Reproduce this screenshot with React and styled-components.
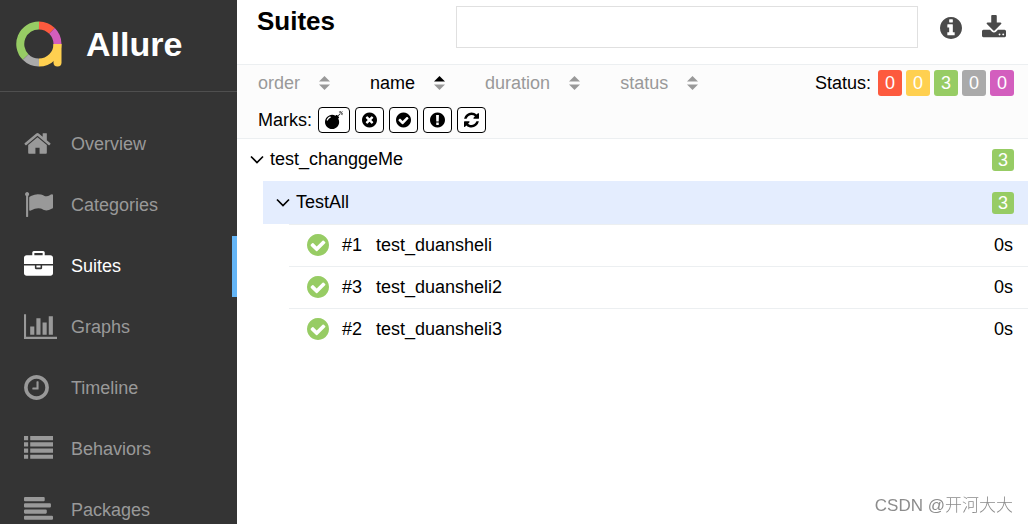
import { useState } from 'react';
import styled, { createGlobalStyle } from 'styled-components';

const GlobalStyle = createGlobalStyle`
  * {
    box-sizing: border-box;
  }

  body {
    margin: 0;
    background: #fff;
    color: #000;
    font-family: "Liberation Sans", Arial, sans-serif;
    font-size: 18px;
    line-height: 22px;
  }

  button,
  input {
    font: inherit;
    color: inherit;
  }
`;

const CIRCLE =
  'm0 0M1664 896q0 209-103 385.5t-279.5 279.5-385.5 103-385.5-103-279.5-279.5-103-385.5 103-385.5 279.5-279.5 385.5-103 385.5 103 279.5 279.5 103 385.5z';

// [left edge, advance width, path], all on a 1792 unit em
const ICONS = {
  home: [64, 1664, 'M1472 992v480q0 26-19 45t-45 19h-384v-384h-256v384h-384q-26 0-45-19t-19-45v-480q0-1 .5-3t.5-3l575-474 575 474q1 2 1 6zm223-69l-62 74q-8 9-21 11h-3q-13 0-21-7l-692-577-692 577q-12 8-24 7-13-2-21-11l-62-74q-8-10-7-23.5t11-21.5l719-599q32-26 76-26t76 26l244 204v-195q0-14 9-23t23-9h192q14 0 23 9t9 23v408l219 182q10 8 11 21.5t-7 23.5z'],
  flag: [0, 1792, 'M320 256q0 72-64 110v1266q0 13-9.5 22.5t-22.5 9.5h-64q-13 0-22.5-9.5t-9.5-22.5v-1266q-64-38-64-110 0-53 37.5-90.5t90.5-37.5 90.5 37.5 37.5 90.5zm1472 64v763q0 25-12.5 38.5t-39.5 27.5q-215 116-369 116-61 0-123.5-22t-108.5-48-115.5-48-142.5-22q-192 0-464 146-17 9-33 9-26 0-45-19t-19-45v-742q0-32 31-55 21-14 79-43 236-120 421-120 107 0 200 29t219 88q38 19 88 19 54 0 117.5-21t110-47 88-47 54.5-21q26 0 45 19t19 45z'],
  briefcase: [0, 1792, 'M640 256h512v-128h-512v128zm1152 640v480q0 66-47 113t-113 47h-1472q-66 0-113-47t-47-113v-480h672v160q0 26 19 45t45 19h320q26 0 45-19t19-45v-160h672zm-768 0v128h-256v-128h256zm768-480v384h-1792v-384q0-66 47-113t113-47h352v-160q0-40 28-68t68-28h576q40 0 68 28t28 68v160h352q66 0 113 47t47 113z'],
  chart: [0, 2048, 'M640 896v512h-256v-512h256zm384-512v1024h-256v-1024h256zm1024 1152v128h-2048v-1536h128v1408h1920zm-640-896v768h-256v-768h256zm384-384v1152h-256v-1152h256z'],
  clock: [128, 1536, 'M1024 544v448q0 14-9 23t-23 9h-320q-14 0-23-9t-9-23v-64q0-14 9-23t23-9h224v-352q0-14 9-23t23-9h64q14 0 23 9t9 23zm416 352q0-148-73-273t-198-198-273-73-273 73-198 198-73 273 73 273 198 198 273 73 273-73 198-198 73-273z' + CIRCLE],
  list: [0, 1792, 'M0 128h256v256h-256zM384 128h1408v256h-1408zM0 512h256v256h-256zM384 512h1408v256h-1408zM0 896h256v256h-256zM384 896h1408v256h-1408zM0 1280h256v256h-256zM384 1280h1408v256h-1408z'],
  align: [0, 1792, 'M64 128h1152q64 0 64 64v128q0 64-64 64h-1152q-64 0-64-64v-128q0-64 64-64zM64 512h1536q64 0 64 64v128q0 64-64 64h-1536q-64 0-64-64v-128q0-64 64-64zM64 896h1280q64 0 64 64v128q0 64-64 64h-1280q-64 0-64-64v-128q0-64 64-64zM64 1280h1664q64 0 64 64v128q0 64-64 64h-1664q-64 0-64-64v-128q0-64 64-64z'],
  info: [128, 1536, 'M1152 1376v-160q0-14-9-23t-23-9h-96v-512q0-14-9-23t-23-9h-320q-14 0-23 9t-9 23v160q0 14 9 23t23 9h96v320h-96q-14 0-23 9t-9 23v160q0 14 9 23t23 9h448q14 0 23-9t9-23zm-128-896v-160q0-14-9-23t-23-9h-192q-14 0-23 9t-9 23v160q0 14 9 23t23 9h192q14 0 23-9t9-23z' + CIRCLE],
  download: [64, 1664, 'M1344 1344q0-26-19-45t-45-19-45 19-19 45 19 45 45 19 45-19 19-45zm256 0q0-26-19-45t-45-19-45 19-19 45 19 45 45 19 45-19 19-45zm128-224v320q0 40-28 68t-68 28h-1472q-40 0-68-28t-28-68v-320q0-40 28-68t68-28h465l135 136q58 56 136 56t136-56l136-136h464q40 0 68 28t28 68zm-325-569q17 41-14 70l-448 448q-18 19-45 19t-45-19l-448-448q-31-29-14-70 17-39 59-39h256v-448q0-26 19-45t45-19h256q26 0 45 19t19 45v448h256q42 0 59 39z'],
  bomb: [0, 1792, 'M571 589q-10-25-34-35t-49 0q-108 44-191 127t-127 191q-10 25 0 49t35 34q13 5 24 5 42 0 60-40 34-84 98.5-148.5t148.5-98.5q25-11 35-35t0-49zm942-356l46 46-244 243 68 68q19 19 19 45.5t-19 45.5l-64 64q89 161 89 343 0 143-55.5 273.5t-150 225-225 150-273.5 55.5-273.5-55.5-225-150-150-225-55.5-273.5 55.5-273.5 150-225 225-150 273.5-55.5q182 0 343 89l64-64q19-19 45.5-19t45.5 19l68 68zm8-56q-10 10-22 10-13 0-23-10l-91-90q-9-10-9-23t9-23q10-9 23-9t23 9l90 91q10 9 10 22.5t-10 22.5zm230 230q-11 9-23 9t-23-9l-90-91q-10-9-10-22.5t10-22.5q9-10 22.5-10t22.5 10l91 90q9 10 9 23t-9 23zm41-183q0 14-9 23t-23 9h-96q-14 0-23-9t-9-23 9-23 23-9h96q14 0 23 9t9 23zm-192-192v96q0 14-9 23t-23 9-23-9-9-23v-96q0-14 9-23t23-9 23 9 9 23zm151 55l-91 90q-10 10-22 10-13 0-23-10-10-9-10-22.5t10-22.5l90-91q10-9 23-9t23 9q9 10 9 23t-9 23z'],
  times: [128, 1536, 'M1277 1122q0-26-19-45l-181-181 181-181q19-19 19-45 0-27-19-46l-90-90q-19-19-46-19-26 0-45 19l-181 181-181-181q-19-19-45-19-27 0-46 19l-90 90q-19 19-19 46 0 26 19 45l181 181-181 181q-19 19-19 45 0 27 19 46l90 90q19 19 46 19 26 0 45-19l181-181 181 181q19 19 45 19 27 0 46-19l90-90q19-19 19-46z' + CIRCLE],
  check: [128, 1536, 'M1412 734q0-28-18-46l-91-90q-19-19-45-19t-45 19l-408 407-226-226q-19-19-45-19t-45 19l-91 90q-18 18-18 46 0 27 18 45l362 362q19 19 45 19 27 0 46-19l543-543q18-18 18-45z' + CIRCLE],
  alert: [128, 1536, 'M1024 1375v-190q0-14-9-23.5t-22-9.5h-192q-13 0-23 10t-10 23v190q0 13 10 23t23 10h192q13 0 22-9.5t9-23.5zm-2-344l18-621q0-12-10-18-10-8-24-8h-220q-14 0-24 8-10 6-10 18l17 621q0 10 10 17.5t24 7.5h185q14 0 23.5-7.5t10.5-17.5z' + CIRCLE],
  refresh: [128, 1536, 'M1639 1056q0 5-1 7-64 268-268 434.5t-478 166.5q-146 0-282.5-55t-243.5-157l-129 129q-19 19-45 19t-45-19-19-45v-448q0-26 19-45t45-19h448q26 0 45 19t19 45-19 45l-137 137q71 66 161 102t187 36q134 0 250-65t186-179q11-17 53-117 8-23 30-23h192q13 0 22.5 9.5t9.5 22.5zm25-800v448q0 26-19 45t-45 19h-448q-26 0-45-19t-19-45 19-45l138-138q-148-137-349-137-134 0-250 65t-186 179q-11 17-53 117-8 23-30 23h-199q-13 0-22.5-9.5t-9.5-22.5v-7q65-268 270-434.5t480-166.5q146 0 284 55.5t245 156.5l130-129q19-19 45-19t45 19 19 45z'],
};

const Svg = styled.svg`
  display: block;
  flex: none;
  fill: currentColor;
`;

function Icon({ name, size }) {
  const [left, width, path] = ICONS[name];
  return (
    <Svg
      viewBox={`${left} 0 ${width} 1792`}
      width={Math.round((size * width) / 1792)}
      height={size}
      aria-hidden="true"
    >
      <path fillRule="evenodd" d={path} />
    </Svg>
  );
}

const Page = styled.div`
  display: flex;
  height: 100vh;
  overflow: hidden;
`;

const Sidebar = styled.aside`
  flex: none;
  width: 237px;
  background: #343434;
  color: #999;
  overflow: hidden;
`;

const Brand = styled.a`
  display: flex;
  align-items: center;
  gap: 24px;
  height: 92px;
  padding: 0 16px 4px;
  border-bottom: 1px solid #4f4f4f;
  color: #fff;
  font-size: 34px;
  font-weight: bold;
  line-height: 40px;
  text-decoration: none;
`;

const Menu = styled.nav`
  padding-top: 22px;
`;

const MenuLink = styled.a`
  display: flex;
  align-items: center;
  height: 61px;
  padding-left: 24px;
  border-right: 5px solid ${(props) => (props.$active ? '#64b5f6' : 'transparent')};
  color: ${(props) => (props.$active ? '#fff' : '#999')};
  text-decoration: none;

  &:hover {
    color: #fff;
  }
`;

const MenuIcon = styled.span`
  width: 47px;
  padding-bottom: 3px;
`;

const MenuText = styled.span`
  padding-bottom: 1px;
`;

const Main = styled.main`
  flex: 1;
  min-width: 0;
`;

const Header = styled.header`
  display: flex;
  align-items: flex-start;
  height: 64px;
  padding: 6px 22px 0 20px;
`;

const Title = styled.h1`
  flex: none;
  width: 199px;
  margin: 0;
  font-size: 26px;
  line-height: 30px;
`;

const Search = styled.input`
  flex: 1;
  min-width: 0;
  height: 42px;
  padding: 0 10px;
  border: 1px solid #e0e0e0;
  outline: none;
`;

const HeaderButton = styled.button`
  margin: 9px 0 0 ${(props) => props.$gap}px;
  padding: 0;
  border: 0;
  background: none;
  color: #4a4a4a;
  cursor: pointer;
`;

const Toolbar = styled.section`
  padding: 5px 14px 5px 21px;
  border-top: 1px solid #eceff1;
  border-bottom: 1px solid #eceff1;
  background: #fcfcfc;
`;

const ToolbarRow = styled.div`
  display: flex;
  align-items: center;
  justify-content: space-between;
  height: 26px;

  & + & {
    margin-top: 11px;
    justify-content: flex-start;
  }
`;

const Sorters = styled.div`
  display: flex;
  gap: 39px;
`;

const SortButton = styled.button`
  display: flex;
  align-items: center;
  gap: 18px;
  padding: 0;
  border: 0;
  background: none;
  color: ${(props) => (props.$active ? '#000' : '#999')};
  cursor: pointer;
`;

const Labels = styled.div`
  display: flex;
  align-items: center;
  gap: ${(props) => props.$gap}px;
`;

const Caption = styled.span`
  margin-right: ${(props) => props.$space}px;
`;

const COLORS = {
  failed: '#fd5a3e',
  broken: '#ffd050',
  passed: '#97cc64',
  skipped: '#aaa',
  unknown: '#d35ebe',
};

const StatusButton = styled.button`
  width: 24px;
  height: 26px;
  padding: 0;
  border: 0;
  border-radius: 3px;
  background: ${(props) => COLORS[props.$status]};
  color: #fff;
  cursor: pointer;
`;

const MarkButton = styled.button`
  display: flex;
  align-items: center;
  height: 26px;
  padding: 0 6px;
  border: 1px solid #000;
  border-radius: 4px;
  background: #fff;
  cursor: pointer;
`;

const GroupRow = styled.button`
  display: flex;
  align-items: center;
  width: calc(100% - ${(props) => props.$indent}px);
  height: ${(props) => (props.$selected ? 43 : 42)}px;
  margin-left: ${(props) => props.$indent}px;
  padding: 0 14px 0 13px;
  border: 0;
  background: ${(props) => (props.$selected ? '#e4edfe' : '#fff')};
  text-align: left;
  cursor: pointer;
`;

const GroupName = styled.span`
  flex: 1;
  padding: 0 0 2px 6px;
`;

const Count = styled.span`
  width: 22px;
  border-radius: 3px;
  background: ${COLORS.passed};
  color: #fff;
  text-align: center;
`;

const Leaves = styled.div`
  margin-left: 52px;
`;

const Leaf = styled.a`
  display: flex;
  align-items: center;
  height: 42px;
  padding: 0 15px 2px 18px;
  border-top: 1px solid #eceff1;
  color: #000;
  text-decoration: none;
`;

const PassedMark = styled.span`
  color: ${COLORS.passed};
`;

const Order = styled.span`
  width: 34px;
  margin-left: 13px;
`;

const LeafName = styled.span`
  flex: 1;
`;

const Watermark = styled.div`
  position: fixed;
  right: 15px;
  bottom: 7px;
  color: #8c8c8c;
  font-family: "Liberation Sans", "Noto Sans CJK SC", sans-serif;
  font-size: 17px;
  font-weight: 300;
`;

function Logo() {
  return (
    <Svg width="46" height="46" viewBox="0 0 46 46" aria-hidden="true">
      <g fill="none" strokeWidth="8">
        <path stroke="#97cc64" d="M9.6 36A18.5 18.5 0 0 1 23 4.5" />
        <path stroke="#fd5a3e" d="M23 4.5A18.5 18.5 0 0 1 36 9.9" />
        <path stroke="#d35ebe" d="M36 9.9A18.5 18.5 0 0 1 41.5 23" />
        <path stroke="#aaa" d="M23 41.5A18.5 18.5 0 0 1 9.6 36" />
        <path stroke="#ffd050" d="M41.5 23A18.5 18.5 0 0 1 23 41.5" />
      </g>
      <path fill="#ffd050" d="M37.5 23h8v18.5a4 4 0 0 1-8 0z" />
    </Svg>
  );
}

function SortArrows({ active }) {
  return (
    <Svg width="13" height="16" viewBox="0 0 13 16" aria-hidden="true">
      <path fill={active ? '#000' : '#999'} d="M6.5 1l5.5 5.5h-11z" />
      <path fill="#999" d="M6.5 15l5.5-5.5h-11z" />
    </Svg>
  );
}

function Chevron() {
  return (
    <Svg width="14" height="10" viewBox="0 0 14 10" aria-hidden="true">
      <path d="M1 1.5l6 6 6-6" fill="none" stroke="#000" strokeWidth="1.7" />
    </Svg>
  );
}

const menu = [
  ['Overview', 'home'],
  ['Categories', 'flag'],
  ['Suites', 'briefcase'],
  ['Graphs', 'chart'],
  ['Timeline', 'clock'],
  ['Behaviors', 'list'],
  ['Packages', 'align'],
];

const statuses = [
  ['failed', 0],
  ['broken', 0],
  ['passed', 3],
  ['skipped', 0],
  ['unknown', 0],
];

const marks = [
  ['Flaky', 'bomb'],
  ['New failed', 'times'],
  ['New passed', 'check'],
  ['New broken', 'alert'],
  ['Retries', 'refresh'],
];

const tests = [
  [1, 'test_duansheli'],
  [3, 'test_duansheli2'],
  [2, 'test_duansheli3'],
];

function App() {
  const [sort, setSort] = useState('name');
  const [query, setQuery] = useState('');

  return (
    <Page>
      <GlobalStyle />
      <Sidebar>
        <Brand href="#">
          <Logo />
          Allure
        </Brand>
        <Menu>
          {menu.map(([label, icon]) => (
            <MenuLink key={label} href={`#${label.toLowerCase()}`} $active={label === 'Suites'}>
              <MenuIcon>
                <Icon name={icon} size={29} />
              </MenuIcon>
              <MenuText>{label}</MenuText>
            </MenuLink>
          ))}
        </Menu>
      </Sidebar>
      <Main>
        <Header>
          <Title>Suites</Title>
          <Search
            type="text"
            aria-label="Search"
            value={query}
            onChange={(e) => setQuery(e.target.value)}
          />
          <HeaderButton type="button" aria-label="Info" $gap={22}>
            <Icon name="info" size={26} />
          </HeaderButton>
          <HeaderButton type="button" aria-label="Download CSV" $gap={20}>
            <Icon name="download" size={26} />
          </HeaderButton>
        </Header>
        <Toolbar>
          <ToolbarRow>
            <Sorters>
              {['order', 'name', 'duration', 'status'].map((key) => (
                <SortButton
                  key={key}
                  type="button"
                  $active={sort === key}
                  onClick={() => setSort(key)}
                >
                  {key}
                  <SortArrows active={sort === key} />
                </SortButton>
              ))}
            </Sorters>
            <Labels $gap={4}>
              <Caption $space={3}>Status:</Caption>
              {statuses.map(([status, count]) => (
                <StatusButton key={status} type="button" aria-label={status} $status={status}>
                  {count}
                </StatusButton>
              ))}
            </Labels>
          </ToolbarRow>
          <ToolbarRow>
            <Labels $gap={5}>
              <Caption $space={1}>Marks:</Caption>
              {marks.map(([label, icon]) => (
                <MarkButton key={label} type="button" aria-label={label}>
                  <Icon name={icon} size={18} />
                </MarkButton>
              ))}
            </Labels>
          </ToolbarRow>
        </Toolbar>
        <GroupRow type="button" $indent={0}>
          <Chevron />
          <GroupName>test_changgeMe</GroupName>
          <Count>3</Count>
        </GroupRow>
        <GroupRow type="button" $indent={26} $selected>
          <Chevron />
          <GroupName>TestAll</GroupName>
          <Count>3</Count>
        </GroupRow>
        <Leaves>
          {tests.map(([order, name]) => (
            <Leaf key={name} href={`#suites/${name}`}>
              <PassedMark>
                <Icon name="check" size={26} />
              </PassedMark>
              <Order>#{order}</Order>
              <LeafName>{name}</LeafName>
              <span>0s</span>
            </Leaf>
          ))}
        </Leaves>
      </Main>
      <Watermark>CSDN @开河大大</Watermark>
    </Page>
  );
}

export default App;
